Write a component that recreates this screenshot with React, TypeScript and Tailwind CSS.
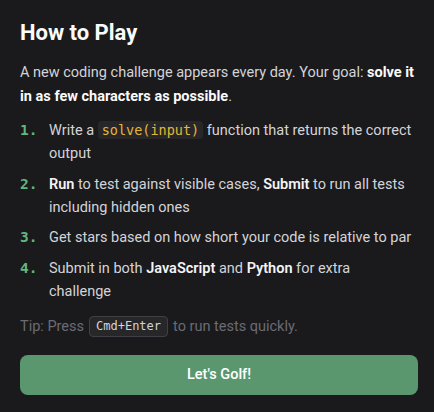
import React from 'react';

const mono = { fontFamily: '"DejaVu Sans Mono", "Liberation Mono", monospace' };

function Code({ children }: { children: React.ReactNode }) {
  return (
    <code
      className="rounded bg-[#27272a] px-1 py-[1px] text-[13.5px] text-[#e5b737]"
      style={mono}
    >
      {children}
    </code>
  );
}

const steps: React.ReactNode[] = [
  <>
    Write a <Code>solve(input)</Code> function that returns the correct output
  </>,
  <>
    <strong className="font-semibold text-[#f4f4f5]">Run</strong> to test against visible cases,{' '}
    <strong className="font-semibold text-[#f4f4f5]">Submit</strong> to run all tests including hidden ones
  </>,
  <>Get stars based on how short your code is relative to par</>,
  <>
    Submit in both <strong className="font-semibold text-[#f4f4f5]">JavaScript</strong> and{' '}
    <strong className="font-semibold text-[#f4f4f5]">Python</strong> for extra challenge
  </>,
];

export default function App() {
  return (
    <div
      className="min-h-[412px] w-full bg-[#1a1a1d] pl-5 pr-4 pt-[18px] text-[#d4d4d8]"
      style={{ fontFamily: 'Roboto, "Noto Sans", sans-serif' }}
    >
      <h2 className="mb-[14px] text-[22px] font-bold leading-[29px] text-[#fafafa]">How to Play</h2>

      <p className="mb-[11px] pr-1 text-[14.5px] leading-[23.5px]">
        A new coding challenge appears every day. Your goal:{' '}
        <strong className="font-bold text-[#fafafa]">solve it in as few characters as possible</strong>.
      </p>

      <ol className="mb-[11px] flex flex-col gap-[7.5px] pr-1">
        {steps.map((step, i) => (
          <li key={i} className="flex text-[14.5px] leading-[23px]">
            <span className="w-[29px] shrink-0 font-bold text-[#5fb87f]" style={mono}>
              {i + 1}.
            </span>
            <span>{step}</span>
          </li>
        ))}
      </ol>

      <p className="mb-[15px] flex items-center text-[14.5px] leading-[26px] text-[#6b6b73]">
        Tip: Press
        <kbd
          className="mx-[5px] rounded border border-[#3f3f46] bg-[#27272a] px-[6px] text-[12px] leading-[19px] text-[#d4d4d8]"
          style={mono}
        >
          Cmd+Enter
        </kbd>
        to run tests quickly.
      </p>

      <button className="flex h-10 w-full items-center justify-center rounded-lg bg-[#5a976f] text-[14.5px] font-medium text-white">
        Let's Golf!
      </button>
    </div>
  );
}
